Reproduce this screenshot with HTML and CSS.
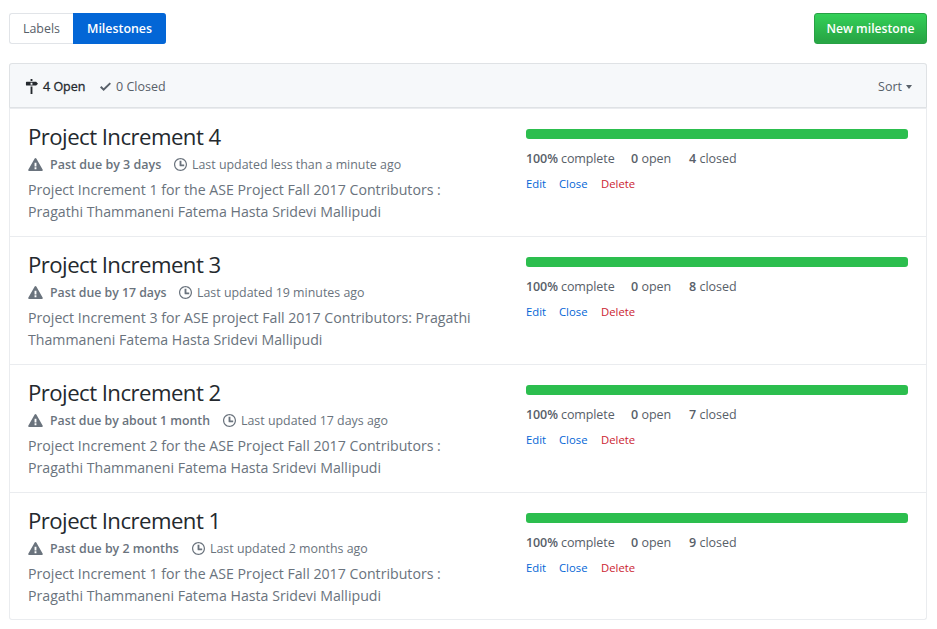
FILE: index.html
```html
<!DOCTYPE html>
<html lang="en">
<head>
<meta charset="utf-8">
<title>Milestones</title>
<link rel="stylesheet" href="styles.css">
</head>
<body>
<svg class="defs" aria-hidden="true">
  <symbol id="milestone" viewBox="0 0 14 16"><path fill-rule="evenodd" d="M8 2H6V0h2v2zm4 5H2c-.55 0-1-.45-1-1V4c0-.55.45-1 1-1h10l2 2-2 2zM8 4H6v2h2V4zM6 16h2V8H6v8z"/></symbol>
  <symbol id="check" viewBox="0 0 12 16"><path fill-rule="evenodd" d="M12 5l-8 8-4-4 1.5-1.5L4 10l6.5-6.5z"/></symbol>
  <symbol id="alert" viewBox="0 0 16 16"><path fill-rule="evenodd" d="M8.865 1.52c-.18-.31-.51-.5-.87-.5s-.69.19-.87.5L.275 13.5c-.18.31-.18.69 0 1 .19.31.52.5.87.5h13.7c.36 0 .69-.19.86-.5.17-.31.18-.69.01-1L8.865 1.52zM8.995 13h-2v-2h2v2zm0-3h-2V6h2v4z"/></symbol>
  <symbol id="clock" viewBox="0 0 14 16"><path fill-rule="evenodd" d="M8 8h3v2H7c-.55 0-1-.45-1-1V4h2v4zM7 2.3c3.14 0 5.7 2.56 5.7 5.7s-2.56 5.7-5.7 5.7A5.71 5.71 0 0 1 1.3 8c0-3.14 2.56-5.7 5.7-5.7zM7 1C3.14 1 0 4.14 0 8s3.14 7 7 7 7-3.14 7-7-3.14-7-7-7z"/></symbol>
</svg>

<header class="subnav">
  <nav class="tabs">
    <a class="tab">Labels</a>
    <a class="tab selected">Milestones</a>
  </nav>
  <a class="btn-primary">New milestone</a>
</header>

<main class="table-list">
  <div class="table-header">
    <a class="state open"><svg class="icon-milestone"><use href="#milestone"/></svg>4 Open</a>
    <a class="state closed"><svg class="icon-check"><use href="#check"/></svg>0 Closed</a>
    <a class="sort">Sort<span class="caret"></span></a>
  </div>

  <section class="milestone">
    <div class="info">
      <h2>Project Increment 4</h2>
      <div class="meta"><svg class="icon-alert"><use href="#alert"/></svg><b class="due d3">Past due by 3 days</b><svg class="icon-clock"><use href="#clock"/></svg><span class="updated">Last updated less than a minute ago</span></div>
      <p>Project Increment 1 for the ASE Project Fall 2017 Contributors :<br>Pragathi Thammaneni Fatema Hasta Sridevi Mallipudi</p>
    </div>
    <div class="progress">
      <div class="bar"></div>
      <div class="stats"><span class="complete"><b>100%</b> complete</span><span class="opened"><b>0</b> open</span><span><b>4</b> closed</span></div>
      <div class="actions"><a class="edit">Edit</a><a class="close">Close</a><a class="delete">Delete</a></div>
    </div>
  </section>

  <section class="milestone">
    <div class="info">
      <h2>Project Increment 3</h2>
      <div class="meta"><svg class="icon-alert"><use href="#alert"/></svg><b class="due d17">Past due by 17 days</b><svg class="icon-clock"><use href="#clock"/></svg><span class="updated">Last updated 19 minutes ago</span></div>
      <p>Project Increment 3 for ASE project Fall 2017 Contributors: Pragathi<br>Thammaneni Fatema Hasta Sridevi Mallipudi</p>
    </div>
    <div class="progress">
      <div class="bar"></div>
      <div class="stats"><span class="complete"><b>100%</b> complete</span><span class="opened"><b>0</b> open</span><span><b>8</b> closed</span></div>
      <div class="actions"><a class="edit">Edit</a><a class="close">Close</a><a class="delete">Delete</a></div>
    </div>
  </section>

  <section class="milestone">
    <div class="info">
      <h2>Project Increment 2</h2>
      <div class="meta"><svg class="icon-alert"><use href="#alert"/></svg><b class="due m1">Past due by about 1 month</b><svg class="icon-clock"><use href="#clock"/></svg><span class="updated">Last updated 17 days ago</span></div>
      <p>Project Increment 2 for the ASE Project Fall 2017 Contributors :<br>Pragathi Thammaneni Fatema Hasta Sridevi Mallipudi</p>
    </div>
    <div class="progress">
      <div class="bar"></div>
      <div class="stats"><span class="complete"><b>100%</b> complete</span><span class="opened"><b>0</b> open</span><span><b>7</b> closed</span></div>
      <div class="actions"><a class="edit">Edit</a><a class="close">Close</a><a class="delete">Delete</a></div>
    </div>
  </section>

  <section class="milestone">
    <div class="info">
      <h2>Project Increment 1</h2>
      <div class="meta"><svg class="icon-alert"><use href="#alert"/></svg><b class="due m2">Past due by 2 months</b><svg class="icon-clock"><use href="#clock"/></svg><span class="updated">Last updated 2 months ago</span></div>
      <p>Project Increment 1 for the ASE Project Fall 2017 Contributors :<br>Pragathi Thammaneni Fatema Hasta Sridevi Mallipudi</p>
    </div>
    <div class="progress">
      <div class="bar"></div>
      <div class="stats"><span class="complete"><b>100%</b> complete</span><span class="opened"><b>0</b> open</span><span><b>9</b> closed</span></div>
      <div class="actions"><a class="edit">Edit</a><a class="close">Close</a><a class="delete">Delete</a></div>
    </div>
  </section>
</main>
</body>
</html>
```
FILE: styles.css
```css
* { box-sizing: border-box; }

body {
  margin: 0;
  padding: 13px 10px 0 9px;
  background: #fff;
  color: #586069;
  font: 12.5px/20px "Segoe UI", "Open Sans", sans-serif;
  white-space: nowrap;
}

svg { fill: currentColor; flex: none; }
.defs { display: none; }
b { font-weight: 600; }

.subnav {
  display: flex;
  justify-content: space-between;
  height: 31px;
  margin-bottom: 19px;
}

.tabs { display: flex; }

.tab {
  width: 64px;
  padding: 5px 0 0 13px;
  border: 1px solid #e1e4e8;
  border-right: 0;
  border-radius: 3px 0 0 3px;
  font-size: 12.4px;
}

.tab.selected {
  width: 93px;
  border-color: #0366d6;
  border-radius: 0 3px 3px 0;
  background: #0366d6;
  color: #fff;
  font-weight: 600;
}

.btn-primary {
  width: 113px;
  padding-top: 5px;
  border: 1px solid #28a145;
  border-radius: 3px;
  background: linear-gradient(#34d058, #28a745 90%);
  color: #fff;
  font-size: 12.2px;
  font-weight: 600;
  text-align: center;
}

.table-list {
  height: 557px;
  border: 1px solid #eaecef;
  border-top: 0;
  border-radius: 3px;
}

.table-header {
  display: flex;
  align-items: center;
  height: 45px;
  margin: 0 -1px;
  padding: 2px 14px 0 15px;
  border: 1px solid #dfe2e5;
  border-radius: 3px 3px 0 0;
  background: #f6f8fa;
}

.state { display: flex; align-items: center; height: 21px; }
.state.open { width: 75px; color: #24292e; -webkit-text-stroke: 0.3px #24292e; }
.icon-milestone { width: 13px; height: 15px; margin-right: 5px; }
.icon-check { width: 11px; height: 15px; margin-right: 5px; }

.sort { display: flex; align-items: center; height: 21px; margin-left: auto; }

.caret {
  margin-left: 4px;
  border: 3.5px solid transparent;
  border-top: 4px solid currentColor;
  border-bottom: 0;
}

.milestone {
  display: grid;
  grid-template-columns: 498px 382px;
  height: 128px;
  padding: 13px 0 0 18px;
  border-top: 1px solid #eaecef;
}

h2 {
  margin: 0;
  color: #24292e;
  font-size: 22.2px;
  font-weight: 400;
  letter-spacing: -0.55px;
  line-height: 30px;
}

.meta {
  display: flex;
  align-items: center;
  height: 26px;
  color: #6a737d;
}

.meta svg { height: 15px; margin-bottom: 1px; }
.icon-alert { width: 15px; margin-right: 7px; }
.icon-clock { width: 13px; margin-right: 5px; }
.due.d3 { width: 124px; }
.due.d17 { width: 129px; font-size: 12.3px; }
.due.m1 { width: 173px; font-size: 12.3px; }
.due.m2 { width: 142px; font-size: 12.4px; }
.updated { font-size: 12.4px; }

.info p {
  margin: 1px 0 0;
  color: #6a737d;
  font-size: 14.17px;
  line-height: 22px;
}

.bar {
  height: 10px;
  margin-top: 7px;
  border-radius: 3px;
  background: #2cbe4e;
}

.stats { display: flex; margin-top: 10px; height: 20px; font-size: 12.5px; }
.stats .complete { width: 105px; letter-spacing: -0.1px; }
.stats .opened { width: 58px; }

.actions { display: flex; margin-top: 5px; font-size: 11.3px; line-height: 20px; }
.edit, .close { color: #0366d6; }
.edit { width: 33px; }
.close { width: 42px; }
.delete { color: #cb2431; }
```
